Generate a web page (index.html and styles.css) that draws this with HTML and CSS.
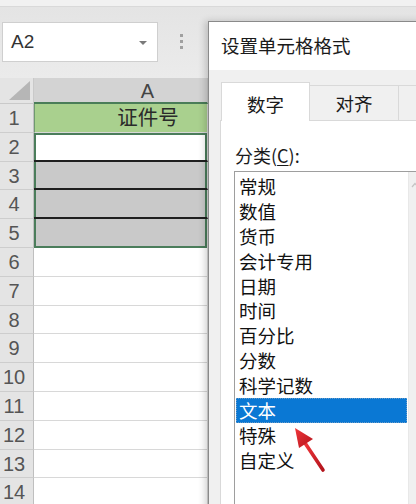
FILE: index.html
```html
<!DOCTYPE html>
<html lang="zh">
<head>
<meta charset="utf-8">
<title>设置单元格格式</title>
<link rel="stylesheet" href="styles.css">
</head>
<body>
<div class="page">
  <div class="topstrip"></div>
  <div class="fbar">
    <div class="namebox">
      <span class="ref">A2</span>
      <span class="dd"></span>
    </div>
    <div class="dots"><i></i><i></i><i></i></div>
  </div>
  <div class="sheet">
    <div class="corner"><span class="tri"></span></div>
    <div class="colh sel-col">A</div>
    <div class="colh"></div>

    <div class="rh">1</div><div class="cell green">证件号</div><div class="cell"></div>
    <div class="rh">2</div><div class="cell blk s-top"></div><div class="cell"></div>
    <div class="rh">3</div><div class="cell gray blk s-mid"></div><div class="cell"></div>
    <div class="rh">4</div><div class="cell gray blk s-mid"></div><div class="cell"></div>
    <div class="rh">5</div><div class="cell gray s-bot"></div><div class="cell"></div>
    <div class="rh">6</div><div class="cell"></div><div class="cell"></div>
    <div class="rh">7</div><div class="cell"></div><div class="cell"></div>
    <div class="rh">8</div><div class="cell"></div><div class="cell"></div>
    <div class="rh">9</div><div class="cell"></div><div class="cell"></div>
    <div class="rh">10</div><div class="cell"></div><div class="cell"></div>
    <div class="rh">11</div><div class="cell"></div><div class="cell"></div>
    <div class="rh">12</div><div class="cell"></div><div class="cell"></div>
    <div class="rh">13</div><div class="cell"></div><div class="cell"></div>
    <div class="rh">14</div><div class="cell"></div><div class="cell"></div>
  </div>

  <div class="dialog">
    <div class="dtitle">设置单元格格式</div>
    <div class="dbody">
      <div class="tabs">
        <div class="tab active">数字</div>
        <div class="tab">对齐</div>
        <div class="tab"></div>
      </div>
      <div class="panel">
        <div class="label">分类(<u>C</u>):</div>
        <div class="listbox">
          <div class="items">
            <div class="item">常规</div>
            <div class="item">数值</div>
            <div class="item">货币</div>
            <div class="item">会计专用</div>
            <div class="item">日期</div>
            <div class="item">时间</div>
            <div class="item">百分比</div>
            <div class="item">分数</div>
            <div class="item">科学记数</div>
            <div class="item selected">文本</div>
            <div class="item">特殊</div>
            <div class="item">自定义</div>
          </div>
          <div class="scroll">
            <svg class="up" width="8" height="6" viewBox="0 0 8 6"><path d="M1 5 L4 1.5 L7 5" fill="none" stroke="#c4c4c4" stroke-width="1.2"/></svg>
          </div>
        </div>
      </div>
    </div>
  </div>

  <svg class="arrow" width="40" height="52" viewBox="0 0 40 52">
    <defs>
      <linearGradient id="rg" x1="0" y1="0" x2="1" y2="1">
        <stop offset="0" stop-color="#f0363b"/>
        <stop offset="1" stop-color="#b3141c"/>
      </linearGradient>
    </defs>
    <line x1="15" y1="19" x2="33" y2="46" stroke="url(#rg)" stroke-width="3.6" stroke-linecap="round"/>
    <polygon points="5,4 23,15 9,24" fill="url(#rg)"/>
  </svg>
</div>
</body>
</html>
```

FILE: styles.css
```css
html, body {
  margin: 0;
  padding: 0;
}
body {
  width: 416px;
  height: 504px;
  overflow: hidden;
  background: #e8e8e8;
  font-family: "Liberation Sans", "Noto Sans CJK SC", sans-serif;
}
.page {
  position: relative;
  width: 416px;
  height: 504px;
  overflow: hidden;
}
.topstrip {
  height: 6px;
  background: #f1f1f1;
  border-bottom: 1px solid #d9d9d9;
}
.fbar {
  height: 71px;
  background: linear-gradient(#e4e4e4, #ebebeb);
  display: flex;
  align-items: flex-start;
  box-sizing: border-box;
  padding-top: 15px;
}
.namebox {
  margin-left: 2px;
  width: 156px;
  height: 40px;
  box-sizing: border-box;
  background: #fff;
  border: 1px solid #cfcfcf;
  display: flex;
  align-items: center;
  justify-content: space-between;
  padding: 0 10px 0 8px;
}
.ref {
  font-size: 19px;
  color: #333;
}
.dd {
  width: 0;
  height: 0;
  border-left: 4px solid transparent;
  border-right: 4px solid transparent;
  border-top: 4px solid #7a7a7a;
  margin-top: 1px;
}
.dots {
  margin-left: 22px;
  margin-top: 12px;
  display: flex;
  flex-direction: column;
  gap: 3px;
}
.dots i {
  display: block;
  width: 3px;
  height: 3px;
  background: #a0a0a0;
}
.sheet {
  display: grid;
  grid-template-columns: 34px 174px 1fr;
  grid-template-rows: 26px repeat(14, 28.8px);
}
.corner {
  background: #e4e4e4;
  border-right: 1px solid #c9c9c9;
  border-bottom: 1px solid #c9c9c9;
  position: relative;
}
.tri {
  position: absolute;
  right: 3px;
  bottom: 3px;
  width: 0;
  height: 0;
  border-left: 21px solid transparent;
  border-bottom: 19px solid #b6b6b6;
}
.colh {
  background: #e4e4e4;
  border-bottom: 1px solid #c9c9c9;
  border-right: 1px solid #c9c9c9;
  text-align: center;
  font-size: 20px;
  line-height: 26px;
  color: #444;
  box-sizing: border-box;
}
.colh.sel-col {
  background: #d3d3d3;
  border-bottom: 2px solid #4a7d58;
  padding-left: 54px;
}
.rh {
  background: #e4e4e4;
  border-right: 1px solid #bfbfbf;
  border-bottom: 1px solid #cdcdcd;
  text-align: center;
  padding-right: 5px;
  font-size: 20px;
  line-height: 29px;
  color: #555;
  box-sizing: border-box;
}
.cell {
  background: #fff;
  border-bottom: 1px solid #d8d8d8;
  border-right: 1px solid #d8d8d8;
  box-sizing: border-box;
}
.cell.green {
  background: #a9d08e;
  text-align: center;
  font-size: 20.5px;
  line-height: 28px;
  color: #2a2a2a;
  padding-left: 54px;
  border-left: 1px solid #6f9a6f;
}
.cell.gray {
  background: #c9c9c9;
}
.cell.blk {
  border-bottom: 2px solid #1f1f1f;
}
.cell.s-top {
  box-shadow: inset 2px 0 0 #4b7d5b, inset -2px 0 0 #4b7d5b, inset 0 2px 0 #4b7d5b;
}
.cell.s-mid {
  box-shadow: inset 2px 0 0 #4b7d5b, inset -2px 0 0 #4b7d5b;
}
.cell.s-bot {
  border-bottom: none;
  box-shadow: inset 2px 0 0 #4b7d5b, inset -2px 0 0 #4b7d5b, inset 0 -2px 0 #4b7d5b;
}
.dialog {
  position: absolute;
  left: 208px;
  top: 21px;
  width: 240px;
  height: 500px;
  box-sizing: border-box;
  border: 1px solid #8a8a8a;
  background: #f0f0f0;
  box-shadow: -3px 0 7px rgba(0, 0, 0, 0.18);
  z-index: 2;
  font-family: "Noto Sans CJK SC", "Liberation Sans", sans-serif;
}
.dtitle {
  height: 48px;
  line-height: 46px;
  background: #fff;
  padding-left: 12px;
  font-size: 18.5px;
  color: #1a1a1a;
}
.dbody {
  padding-top: 12px;
}
.tabs {
  display: flex;
  align-items: flex-end;
  padding-left: 12px;
  height: 38px;
  position: relative;
  z-index: 1;
}
.tab {
  flex: 0 0 89px;
  width: 89px;
  height: 35px;
  box-sizing: border-box;
  border: 1px solid #d9d9d9;
  border-bottom: none;
  border-left: none;
  background: #f0f0f0;
  text-align: center;
  line-height: 34px;
  font-size: 18.5px;
  color: #1a1a1a;
}
.tab.active {
  height: 39px;
  margin-bottom: -1px;
  background: #fff;
  border-left: 1px solid #d9d9d9;
  line-height: 42px;
}
.panel {
  margin-left: 11px;
  height: 400px;
  background: #fff;
  border: 1px solid #d9d9d9;
  padding: 22px 0 0 13px;
  box-sizing: border-box;
}
.label {
  font-size: 18px;
  line-height: 24px;
  color: #1a1a1a;
  padding-left: 1px;
}
.label u {
  text-decoration-thickness: 1px;
  text-underline-offset: 2px;
}
.listbox {
  margin-top: 4px;
  height: 340px;
  border-top: 1px solid #9e9e9e;
  border-left: 1px solid #9e9e9e;
  display: flex;
}
.items {
  width: 173px;
  padding: 2px 1px 0 1px;
  box-sizing: border-box;
}
.item {
  height: 24.9px;
  line-height: 24.9px;
  padding-left: 3px;
  font-size: 18.5px;
  color: #111;
  box-sizing: border-box;
}
.item.selected {
  background: #0a78d4;
  color: #fff;
  outline: 1px dotted #6a9cc8;
  outline-offset: -1px;
}
.scroll {
  width: 17px;
  background: #f0f0f0;
  border-left: 1px solid #e8e8e8;
  padding-top: 10px;
  box-sizing: border-box;
}
.up {
  display: block;
  margin-left: 2px;
}
.arrow {
  position: absolute;
  left: 290px;
  top: 424px;
  z-index: 3;
}
```
